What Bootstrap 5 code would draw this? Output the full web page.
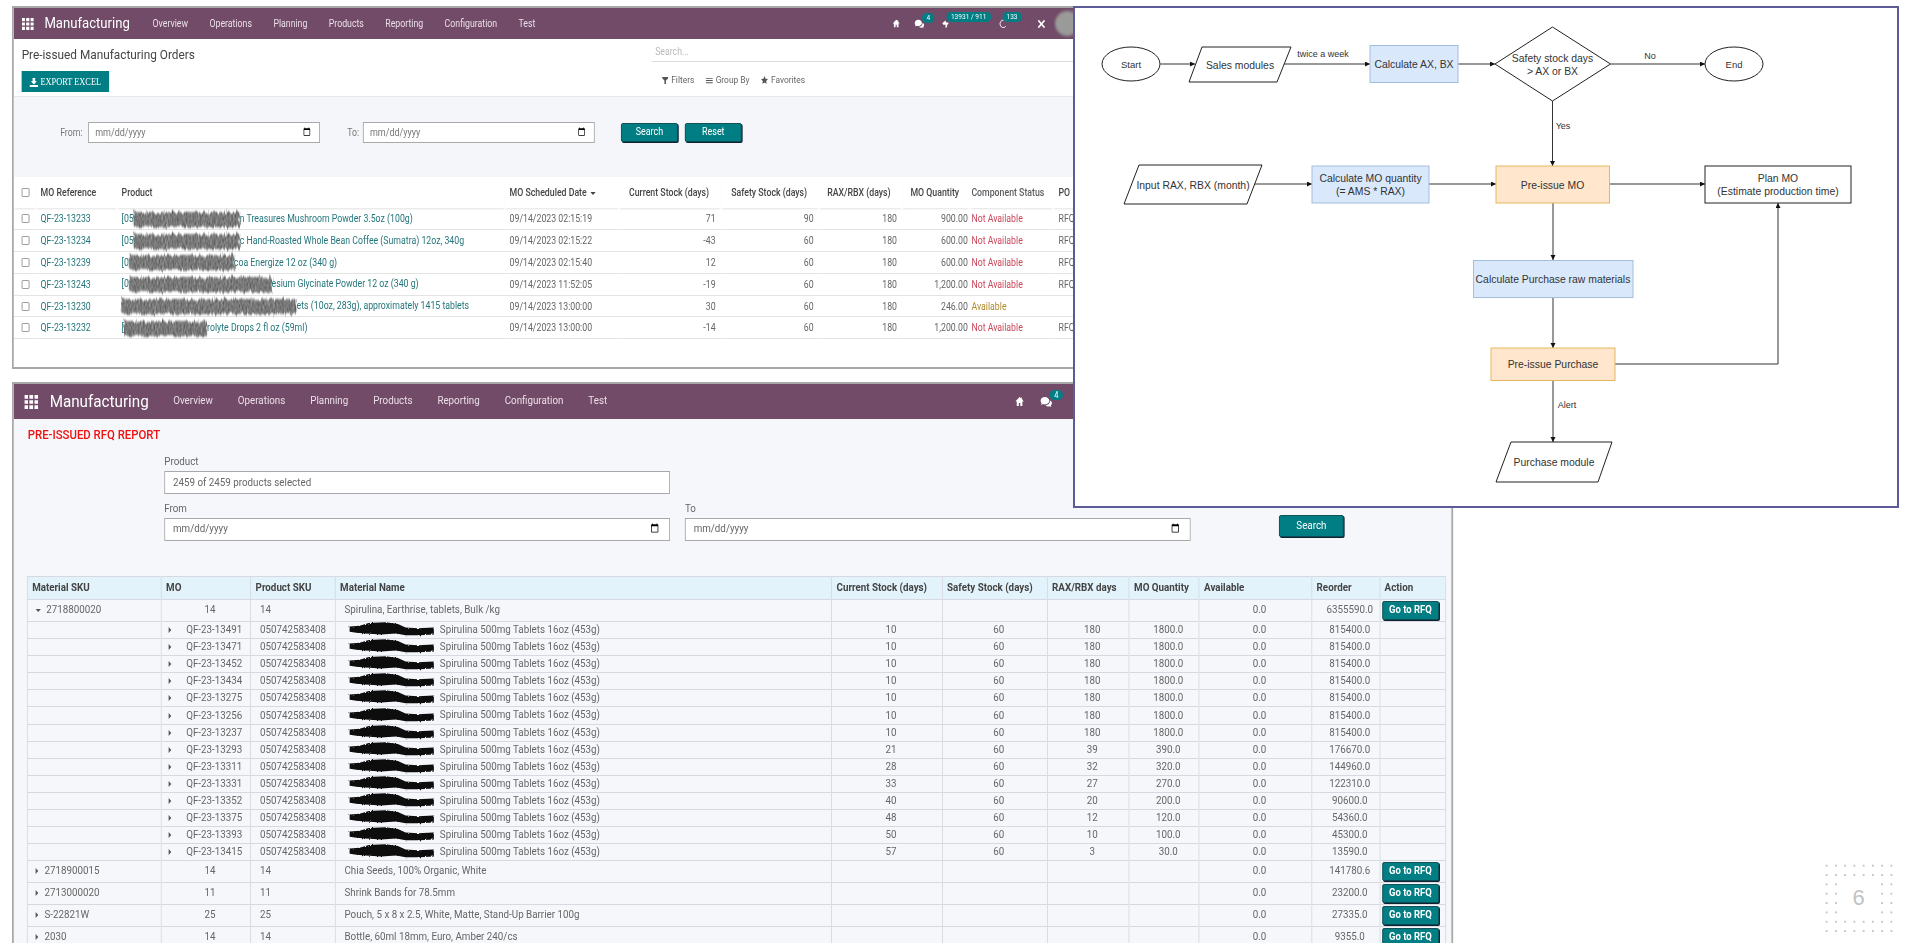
<!DOCTYPE html>
<html lang="en">
<head>
<meta charset="UTF-8">
<title>Pre-issued MO and RFQ</title>
<link rel="stylesheet" href="https://cdn.jsdelivr.net/npm/bootstrap@5.3.0/dist/css/bootstrap.min.css">
<style>
    body { margin: 0; background: #fff; font-family: Roboto, "Liberation Sans", sans-serif; }
    .slide { position: relative; width: 1905px; height: 943px; overflow: hidden; background: #fff; }

    /* the two screenshots are pasted squeezed on the slide */
    .shot { position: absolute; border: 2px solid #a8a8a8; transform: scaleX(.875); transform-origin: 0 0; filter: blur(.3px); overflow: hidden; }
    .shot-mo { left: 12px; top: 6px; width: 1244px; height: 363px; background: #fff; }
    .shot-rfq { left: 12px; top: 382px; width: 1647px; height: 600px; background: #f5f7fb; border-bottom: 0; }

    .topbar { background: #714b67; color: #fff; padding: 0; flex-wrap: nowrap; justify-content: flex-start; }
    .topbar .nav-link { color: #ecdfe9; padding: 0; }
    .shot-mo .topbar { height: 31px; }
    .shot-rfq .topbar { height: 35px; }
    .apps-ico { display: block; fill: #fff; }
    .shot-mo .apps-ico { margin: 0 12px 0 9px; width: 14px; height: 12px; }
    .shot-rfq .apps-ico { margin: 0 13px 0 12px; width: 16px; height: 14px; }
    .brand-name { font-weight: 400; color: #fff; }
    .shot-mo .brand-name { font-size: 15px; margin-right: 26px; }
    .shot-rfq .brand-name { font-size: 17.4px; margin-right: 28px; }
    .shot-mo .menu-list { gap: 24.5px; font-size: 10px; }
    .shot-rfq .menu-list { gap: 28.5px; font-size: 11.2px; }

    .sys-tray { position: relative; margin-left: auto; display: flex; align-items: center; height: 100%; }
    .shot-mo .sys-tray { width: 236px; }
    .shot-rfq .sys-tray { width: 499px; }
    .tray-item { position: relative; display: block; fill: #fff; flex: none; }
    .pill { position: absolute; top: -6px; background: #017e84; color: #fff; border-radius: 6px; font-size: 7.5px; line-height: 10px; height: 10px; padding: 0 5px; font-weight: 400; white-space: nowrap; }
    .face { width: 28px; height: 25px; border-radius: 50%; background: #9a9a98; filter: blur(1.5px); margin-left: 10px; flex: none; }

    /* MO list control panel */
    .ctl-panel { height: 58px; display: flex; border-bottom: 1px solid #e8e8ea; }
    .ctl-left { width: 729px; padding: 5px 0 0 9px; }
    .page-title { font-size: 13.5px; line-height: 20px; font-weight: 400; color: #444; margin: 0 0 5px; }
    .btn-export { background: #017e84; color: #fff; border: 0; border-radius: 0; width: 100px; height: 21px; padding: 0; font: 9.5px "Liberation Serif", serif; }
    .ctl-right { flex: 1; padding-top: 5px; }
    .search-line { height: 18px; border-bottom: 1px solid #dcdcdc; color: #bbb; font-size: 10px; line-height: 16px; padding-left: 4px; }
    .filter-row { display: flex; gap: 13px; margin: 10px 0 0 12px; font-size: 9.6px; line-height: 16px; color: #666; }
    .filter-row svg { fill: #555; margin-right: 1px; vertical-align: -1px; }

    .date-band { height: 80px; background: #f4f6fa; display: flex; align-items: flex-start; padding: 25px 0 0 53px; font-size: 10px; color: #777; }
    .date-band label { width: 32px; line-height: 21px; }
    .date-band .form-control { width: 265px; height: 21px; min-height: 0; border-radius: 0; border-color: #a9a9a9; font-size: 10.3px; padding: 0 7px; color: #777; }
    .date-band .to-lbl { width: 18px; margin-left: 31px; }
    .btn-teal { background: #017e84; color: #fff; border: 1px solid #0d4b50; border-radius: 2px; box-shadow: 1px 1px 0 #123; padding: 0; line-height: 1; }
    .btn-teal:hover { background: #017e84; color: #fff; }
    .date-band .btn-teal { width: 65px; height: 19px; font-size: 10.2px; margin-top: 1px; }

    .mo-table { table-layout: fixed; width: 1240px; margin: 0; font-size: 10px; color: #666; --bs-table-bg: transparent; }
    .mo-table > * > tr > * { padding: 0 5.7px; vertical-align: middle; border-bottom: 1px solid #e3e3e3; overflow: visible; white-space: nowrap; }
    .mo-table thead tr { height: 31px; }
    .mo-table thead th { font-weight: 500; color: #444; border-bottom: 0; box-shadow: 0 2px 2px -1px #e2e2e2; }
    .mo-table thead th.text-end { padding-right: 13px; }
    .mo-table tbody tr { height: 21.8px; }
    .mo-table .form-check-input { width: 9px; height: 9px; margin: 0 0 0 1px; border-radius: 1px; border-color: #999; display: block; }
    .mo-link { color: #23757a; }
    .qty-cell { padding-right: 3px !important; }
    .st-no { color: #c9485b; padding-left: 1px !important; }
    .st-yes { color: #b08a2e; padding-left: 1px !important; }
    .smear { display: inline-block; height: 15px; background: #777; vertical-align: middle; filter: url(#mottle); }
    .sort-tri { display: inline-block; border: 3px solid transparent; border-top-color: #444; border-bottom: 0; margin-left: 4px; vertical-align: 1px; }

    /* RFQ report */
    .rfq-title { color: #f01010; font-size: 13px; font-weight: 500; line-height: 18px; margin: 7px 0 0 16px; }
    .rfq-form { padding: 11px 0 0 172px; font-size: 11.2px; color: #666; }
    .rfq-form label { display: block; line-height: 14px; margin-bottom: 1.5px; }
    .rfq-form .form-control { width: 578px; height: 23px; min-height: 0; border-radius: 0; border-color: #a9a9a9; font-size: 11.2px; color: #666; padding: 0 9px; background: #fff; }
    .rfq-form .form-control::placeholder { color: #666; opacity: 1; }
    .rfq-form .date-line { margin-top: 8.5px; }
    .go-btn { width: 74px; height: 22px; font-size: 11.2px; margin: 0 0 3.5px 0; }
    .rfq-table { table-layout: fixed; width: 1620.6px; margin: 35.5px 0 0 15px; font-size: 11.2px; color: #666; --bs-table-bg: transparent; --bs-table-border-color: #d6d9df; border-color: #d6d9df; }
    .rfq-table > * > tr > * { padding: 0 0 0 5px; vertical-align: middle; white-space: nowrap; overflow: visible; }
    .rfq-table thead tr { height: 23px; }
    .rfq-table thead th { background: #e3f3fc; color: #444; font-weight: 700; }
    .rfq-table tr.grp-row { height: 22px; }
    .rfq-table tr.sub-row { height: 17.1px; line-height: 14px; }
    .rfq-table .ctr { text-align: center; padding-left: 9px; }
    .rfq-table .pad-name { padding-left: 10px; }
    .tri-d, .tri-r { display: inline-block; border: 3px solid transparent; }
    .tri-d { border-top-color: #555; border-bottom: 0; margin: 0 6px 1px 4px; }
    .tri-r { border-left-color: #555; border-right: 0; margin: 0 7px 0 4px; }
    .sub-tri { margin: 0 17px 0 3px; }
    .black-out { width: 108px; height: 14px; vertical-align: middle; overflow: visible; margin-right: 1px; }
    #blot { overflow: visible; }
    .rfq-btn { width: 65px; height: 19px; font-size: 10.8px; font-weight: 700; margin-left: -3px; display: block; }

    /* flow chart pasted over the screenshots */
    .chart-frame { position: absolute; left: 1073px; top: 6px; width: 826px; height: 502px; border: 2px solid #5d5a98; background: #fff; }
    .chart-frame svg { display: block; font-family: "Liberation Sans", Arial, sans-serif; font-size: 10.4px; fill: #333; }
    .chart-frame text { text-anchor: middle; dominant-baseline: central; }
    .chart-frame .lbl { font-size: 9px; }
    .ln { stroke: #333; stroke-width: 1; fill: none; marker-end: url(#tip); }
    .bx-w { fill: #fff; stroke: #222; stroke-width: 1; }
    .bx-b { fill: #dae8fc; stroke: #a5bddc; stroke-width: 1; }
    .bx-o { fill: #ffe6cc; stroke: #e5b75c; stroke-width: 1; }

    .page-no { position: absolute; left: 1821.5px; top: 860.5px; width: 74px; height: 74.8px; background-image: radial-gradient(circle, #c4c4c4 1.1px, transparent 1.4px); background-size: 9.25px 9.35px; }
    .page-no span { position: absolute; left: 18.5px; top: 18.7px; width: 37px; height: 37.4px; background: #fff; color: #c2c2c2; font: 22px/37px "Liberation Sans", sans-serif; text-align: center; }
</style>
</head>
<body>
<svg width="0" height="0" class="position-absolute">
    <defs>
        <filter id="rough" x="-10%" y="-40%" width="120%" height="180%">
            <feTurbulence type="fractalNoise" baseFrequency="0.35" numOctaves="2" seed="4" result="n"/>
            <feDisplacementMap in="SourceGraphic" in2="n" scale="3"/>
            <feGaussianBlur stdDeviation="0.4"/>
        </filter>
        <filter id="mottle" x="-10%" y="-30%" width="120%" height="160%" color-interpolation-filters="sRGB">
            <feTurbulence type="fractalNoise" baseFrequency="0.3" numOctaves="2" seed="7" result="n"/>
            <feDisplacementMap in="SourceGraphic" in2="n" scale="7" result="shape"/>
            <feTurbulence type="fractalNoise" baseFrequency="0.5" numOctaves="2" seed="2"/>
            <feColorMatrix values=".6 0 0 0 .17  .6 0 0 0 .17  .6 0 0 0 .17  0 0 0 0 1"/>
            <feComposite operator="in" in2="shape"/>
            <feGaussianBlur stdDeviation="0.8"/>
        </filter>
        <symbol id="blot" viewBox="0 0 108 16">
            <path d="M-1 4 L12 3 L24 0 L46 -1 L62 1 L72 5 L88 6 L109 5 L109 13 L90 14 L72 14 L60 12 L40 13 L20 12 L8 11 L-1 10Z" fill="#0b0b0b" filter="url(#rough)"/>
        </symbol>
        <symbol id="ico-home" viewBox="0 0 12 12"><path d="M6 1 1 5.600l.7.8.8-.7V11h2.600V7.600h1.800V11h2.600V5.700l.8.7.7-.8L9 3.300V1.500H8v.9Z"/></symbol>
        <symbol id="ico-chat" viewBox="0 0 14 12"><path d="M5.500 1C2.700 1 .5 2.700 .5 4.800c0 1 .5 1.800 1.200 2.500L1 9l2.200-.9c.7.2 1.500.3 2.300.3 2.800 0 5-1.600 5-3.600S8.300 1 5.500 1Z"/><path d="M11.300 4.400c.1.200.1.500.1.700 0 2.300-2.300 4.100-5.100 4.200.8.800 2 1.200 3.300 1.200.5 0 1-.1 1.500-.2l1.700.7-.5-1.500c.8-.7 1.200-1.500 1.200-2.400 0-1.100-.8-2-2.200-2.700Z"/></symbol>
        <symbol id="ico-bug" viewBox="0 0 12 12"><path d="M1 5.500 5.500 2 7 4.500 11 5 8.500 8 7.500 11.500 5.500 11 6 7.500 2.500 7.500Z"/></symbol>
        <symbol id="ico-moon" viewBox="0 0 12 12"><path d="M8 1.500a5 5 0 1 0 3 8.200" fill="none" stroke="#fff" stroke-width="1.300"/></symbol>
        <symbol id="ico-tools" viewBox="0 0 12 12"><path d="M1 2.500 2.500 1l8.500 8.500L9.500 11Z"/><path d="M11 2.500 9.500 1 1 9.500 2.500 11Z"/></symbol>
        <symbol id="ico-grid" viewBox="0 0 15 13"><path d="M0 0h4v3.500H0zM5.500 0h4v3.500h-4zM11 0h4v3.500h-4zM0 4.750h4v3.500H0zM5.500 4.750h4v3.500h-4zM11 4.750h4v3.500h-4zM0 9.500h4V13H0zM5.500 9.500h4V13h-4zM11 9.500h4V13h-4z"/></symbol>
    </defs>
</svg>

<div class="slide">

    <!-- manufacturing orders list -->
    <div class="shot shot-mo">
        <nav class="navbar topbar">
            <svg class="apps-ico"><use href="#ico-grid"/></svg>
            <span class="brand-name">Manufacturing</span>
            <ul class="nav menu-list">
                <li><a class="nav-link" href="#">Overview</a></li>
                <li><a class="nav-link" href="#">Operations</a></li>
                <li><a class="nav-link" href="#">Planning</a></li>
                <li><a class="nav-link" href="#">Products</a></li>
                <li><a class="nav-link" href="#">Reporting</a></li>
                <li><a class="nav-link" href="#">Configuration</a></li>
                <li><a class="nav-link" href="#">Test</a></li>
            </ul>
            <div class="sys-tray">
                <svg class="tray-item" width="9" height="9"><use href="#ico-home"/></svg>
                <div class="tray-item ms-3" style="width:12px;height:10px"><svg class="d-block" width="12" height="10"><use href="#ico-chat"/></svg><span class="pill" style="left:9px">4</span></div>
                <div class="tray-item" style="width:10px;height:9px;margin-left:19px"><svg class="d-block" width="10" height="9"><use href="#ico-bug"/></svg><span class="pill" style="left:6px;top:-7px">13931 / 911</span></div>
                <div class="tray-item" style="width:10px;height:9px;margin-left:54.5px"><svg class="d-block" width="10" height="9"><use href="#ico-moon"/></svg><span class="pill" style="left:5px;top:-7px">133</span></div>
                <svg class="tray-item" width="11" height="10" style="margin-left:34px"><use href="#ico-tools"/></svg>
                <div class="face"></div>
            </div>
        </nav>
        <div class="ctl-panel">
            <div class="ctl-left">
                <h1 class="page-title">Pre-issued Manufacturing Orders</h1>
                <button class="btn btn-export" type="button"><svg width="10" height="9" viewBox="0 0 10 9" fill="#fff"><path d="M3.500 0h3v3.200h2L5 6.500 1.500 3.200h2ZM0 7h10v2H0Z"/></svg> EXPORT EXCEL</button>
            </div>
            <div class="ctl-right">
                <div class="search-line">Search...</div>
                <div class="filter-row">
                    <span><svg width="7" height="7" viewBox="0 0 8 8"><path d="M0 0h8v1.500L5 4v4H3V4L0 1.500Z"/></svg> Filters</span>
                    <span><svg width="8" height="7" viewBox="0 0 9 8"><path d="M0 1h9v1H0zM0 3.500h9v1H0zM0 6h9v1H0z"/></svg> Group By</span>
                    <span><svg width="8" height="8" viewBox="0 0 10 10"><path d="m5 0 1.500 3.300 3.500.4-2.600 2.400.7 3.600L5 8 1.900 9.700l.7-3.600L0 3.700l3.500-.4Z"/></svg> Favorites</span>
                </div>
            </div>
        </div>
        <div class="date-band">
            <label>From:</label>
            <input type="date" class="form-control">
            <label class="to-lbl">To:</label>
            <input type="date" class="form-control">
            <button class="btn btn-teal" style="margin-left:30px" type="button">Search</button>
            <button class="btn btn-teal ms-2" type="button">Reset</button>
        </div>
        <table class="table mo-table">
            <colgroup>
                <col style="width:25px"><col style="width:92.6px"><col style="width:443.4px"><col style="width:131.4px"><col style="width:115.4px"><col style="width:112px"><col style="width:95.4px"><col style="width:78.3px"><col style="width:94.9px"><col style="width:52px">
            </colgroup>
            <thead>
                <tr>
                    <th class="ps-2"><input class="form-check-input" type="checkbox"></th>
                    <th>MO Reference</th><th>Product</th>
                    <th>MO Scheduled Date<span class="sort-tri"></span></th>
                    <th class="text-end">Current Stock (days)</th><th class="text-end">Safety Stock (days)</th><th class="text-end">RAX/RBX (days)</th><th class="text-end">MO Quantity</th>
                    <th class="st-no text-body-secondary">Component Status</th><th>PO</th>
                </tr>
            </thead>
            <tbody id="moRows"></tbody>
        </table>
    </div>

    <!-- pre-issued RFQ report -->
    <div class="shot shot-rfq">
        <nav class="navbar topbar">
            <svg class="apps-ico"><use href="#ico-grid"/></svg>
            <span class="brand-name">Manufacturing</span>
            <ul class="nav menu-list">
                <li><a class="nav-link" href="#">Overview</a></li>
                <li><a class="nav-link" href="#">Operations</a></li>
                <li><a class="nav-link" href="#">Planning</a></li>
                <li><a class="nav-link" href="#">Products</a></li>
                <li><a class="nav-link" href="#">Reporting</a></li>
                <li><a class="nav-link" href="#">Configuration</a></li>
                <li><a class="nav-link" href="#">Test</a></li>
            </ul>
            <div class="sys-tray">
                <svg class="tray-item" width="11" height="11"><use href="#ico-home"/></svg>
                <div class="tray-item" style="width:14px;height:12px;margin-left:18px"><svg class="d-block" width="14" height="12"><use href="#ico-chat"/></svg><span class="pill" style="left:11px;font-size:8.500px">4</span></div>
            </div>
        </nav>
        <h2 class="rfq-title">PRE-ISSUED RFQ REPORT</h2>
        <form class="rfq-form">
            <label>Product</label>
            <input type="text" class="form-control" placeholder="2459 of 2459 products selected">
            <div class="d-flex align-items-end date-line">
                <div>
                    <label>From</label>
                    <input type="date" class="form-control">
                </div>
                <div style="margin-left:17px">
                    <label>To</label>
                    <input type="date" class="form-control">
                </div>
                <button class="btn btn-teal go-btn" style="margin-left:101px" type="button">Search</button>
            </div>
        </form>
        <table class="table table-bordered rfq-table">
            <colgroup>
                <col style="width:153.1px"><col style="width:102.3px"><col style="width:96.6px"><col style="width:567.4px"><col style="width:126.3px"><col style="width:120px"><col style="width:93.7px"><col style="width:80px"><col style="width:128.6px"><col style="width:77.7px"><col style="width:74.9px">
            </colgroup>
            <thead>
                <tr>
                    <th>Material SKU</th><th>MO</th><th>Product SKU</th><th>Material Name</th><th>Current Stock (days)</th><th>Safety Stock (days)</th><th>RAX/RBX days</th><th>MO Quantity</th><th>Available</th><th>Reorder</th><th>Action</th>
                </tr>
            </thead>
            <tbody id="rfqRows"></tbody>
        </table>
    </div>

    <!-- flow chart, uses slide coordinates through the viewBox -->
    <div class="chart-frame">
        <svg width="822" height="498" viewBox="1075 8 822 498">
            <defs>
                <marker id="tip" markerWidth="6" markerHeight="6" refX="5" refY="2.500" orient="auto" markerUnits="userSpaceOnUse"><path d="M0 0 5 2.500 0 5Z" fill="#111"/></marker>
            </defs>
            <path class="ln" d="M1160.500 64H1195"/>
            <path class="ln" d="M1283 64H1370"/>
            <path class="ln" d="M1458 64H1495"/>
            <path class="ln" d="M1610.500 64H1705"/>
            <path class="ln" d="M1552.500 101V166"/>
            <path class="ln" d="M1254 184H1312"/>
            <path class="ln" d="M1429 184H1496"/>
            <path class="ln" d="M1609.500 184H1705"/>
            <path class="ln" d="M1553 203V260"/>
            <path class="ln" d="M1553 298V348"/>
            <path class="ln" d="M1615 364H1778V203"/>
            <path class="ln" d="M1553 380.500V442"/>

            <ellipse class="bx-w" cx="1131" cy="64" rx="29" ry="17"/>
            <text x="1131" y="64" class="lbl" style="font-size:9.500px">Start</text>
            <path class="bx-w" d="M1202 47H1291L1277 82H1189Z"/>
            <text x="1240" y="65">Sales modules</text>
            <text x="1323" y="54" class="lbl">twice a week</text>
            <rect class="bx-b" x="1370" y="45.500" width="88" height="37"/>
            <text x="1414" y="64">Calculate AX, BX</text>
            <path class="bx-w" d="M1552.500 27 1610.500 64 1552.500 101 1495 64Z"/>
            <text x="1552.500" y="58">Safety stock days</text>
            <text x="1552.500" y="71">&gt; AX or BX</text>
            <text x="1650" y="56" class="lbl">No</text>
            <ellipse class="bx-w" cx="1734" cy="64" rx="29" ry="17"/>
            <text x="1734" y="64" class="lbl" style="font-size:9.500px">End</text>
            <text x="1563" y="126" class="lbl">Yes</text>

            <path class="bx-w" d="M1139 165H1262L1247 204H1124Z"/>
            <text x="1193" y="185">Input RAX, RBX (month)</text>
            <rect class="bx-b" x="1312" y="166" width="117" height="37"/>
            <text x="1370.500" y="178">Calculate MO quantity</text>
            <text x="1370.500" y="191">(= AMS * RAX)</text>
            <rect class="bx-o" x="1496" y="166" width="113.500" height="37"/>
            <text x="1552.500" y="185">Pre-issue MO</text>
            <rect class="bx-w" x="1705" y="166" width="146" height="37"/>
            <text x="1778" y="178">Plan MO</text>
            <text x="1778" y="191">(Estimate production time)</text>

            <rect class="bx-b" x="1473.500" y="260.500" width="159.500" height="37"/>
            <text x="1553" y="279">Calculate Purchase raw materials</text>
            <rect class="bx-o" x="1491" y="348" width="124" height="32.500"/>
            <text x="1553" y="364.500">Pre-issue Purchase</text>
            <text x="1567" y="405" class="lbl">Alert</text>
            <path class="bx-w" d="M1511 442H1612L1598 482H1496Z"/>
            <text x="1554" y="462.500">Purchase module</text>
        </svg>
    </div>

    <div class="page-no"><span>6</span></div>
</div>

<script src="https://cdn.jsdelivr.net/npm/bootstrap@5.3.0/dist/js/bootstrap.bundle.min.js"></script>
<script>
    const moData = [
        ["QF-23-13233", "[05", 121, "n Treasures Mushroom Powder 3.5oz (100g)", "09/14/2023 02:15:19", 71, 90, "900.00", false],
        ["QF-23-13234", "[05", 121, "c Hand-Roasted Whole Bean Coffee (Sumatra) 12oz, 340g", "09/14/2023 02:15:22", -43, 60, "600.00", false],
        ["QF-23-13239", "[0", 120, "coa Energize 12 oz (340 g)", "09/14/2023 02:15:40", 12, 60, "600.00", false],
        ["QF-23-13243", "[0", 163, "esium Glycinate Powder 12 oz (340 g)", "09/14/2023 11:52:05", -19, 60, "1,200.00", false],
        ["QF-23-13230", "", 200, "ets (10oz, 283g), approximately 1415 tablets", "09/14/2023 13:00:00", 30, 60, "246.00", true],
        ["QF-23-13232", "[", 95, "rolyte Drops 2 fl oz (59ml)", "09/14/2023 13:00:00", -14, 60, "1,200.00", false]
    ];

    document.getElementById("moRows").innerHTML = moData.map(m => `
        <tr>
            <td class="ps-2"><input class="form-check-input" type="checkbox"></td>
            <td class="mo-link">${m[0]}</td>
            <td class="mo-link">${m[1]}<span class="smear" style="width:${m[2]}px"></span>${m[3]}</td>
            <td>${m[4]}</td>
            <td class="text-end">${m[5]}</td>
            <td class="text-end">${m[6]}</td>
            <td class="text-end">180</td>
            <td class="text-end qty-cell">${m[7]}</td>
            <td class="${m[8] ? "st-yes" : "st-no"}">${m[8] ? "Available" : "Not Available"}</td>
            <td>${m[8] ? "" : "RFQ-2309"}</td>
        </tr>`).join("");

    const subRows = [
        [13491, 10, 180, "1800.0", "815400.0"], [13471, 10, 180, "1800.0", "815400.0"],
        [13452, 10, 180, "1800.0", "815400.0"], [13434, 10, 180, "1800.0", "815400.0"],
        [13275, 10, 180, "1800.0", "815400.0"], [13256, 10, 180, "1800.0", "815400.0"],
        [13237, 10, 180, "1800.0", "815400.0"], [13293, 21, 39, "390.0", "176670.0"],
        [13311, 28, 32, "320.0", "144960.0"], [13331, 33, 27, "270.0", "122310.0"],
        [13352, 40, 20, "200.0", "90600.0"], [13375, 48, 12, "120.0", "54360.0"],
        [13393, 50, 10, "100.0", "45300.0"], [13415, 57, 3, "30.0", "13590.0"]
    ];

    function groupRow(sku, mo, name, reorder, open) {
        return `<tr class="grp-row">
            <td><span class="${open ? "tri-d" : "tri-r"}"></span>${sku}</td>
            <td class="ctr">${mo}</td><td class="pad-name">${mo}</td><td class="pad-name">${name}</td>
            <td></td><td></td><td></td><td></td>
            <td class="ctr">0.0</td><td class="ctr">${reorder}</td>
            <td><button class="btn btn-teal rfq-btn" type="button">Go to RFQ</button></td>
        </tr>`;
    }

    let rfqHtml = groupRow("2718800020", 14, "Spirulina, Earthrise, tablets, Bulk /kg", "6355590.0", true);
    subRows.forEach(r => {
        rfqHtml += `<tr class="sub-row">
            <td></td>
            <td><span class="tri-r sub-tri"></span>QF-23-${r[0]}</td>
            <td class="pad-name">050742583408</td>
            <td class="pad-name"><svg class="black-out"><use href="#blot"/></svg>Spirulina 500mg Tablets 16oz (453g)</td>
            <td class="ctr">${r[1]}</td><td class="ctr">60</td><td class="ctr">${r[2]}</td><td class="ctr">${r[3]}</td>
            <td class="ctr">0.0</td><td class="ctr">${r[4]}</td><td></td>
        </tr>`;
    });
    rfqHtml += groupRow("2718900015", 14, "Chia Seeds, 100% Organic, White", "141780.6");
    rfqHtml += groupRow("2713000020", 11, "Shrink Bands for 78.5mm", "23200.0");
    rfqHtml += groupRow("S-22821W", 25, "Pouch, 5 x 8 x 2.5, White, Matte, Stand-Up Barrier 100g", "27335.0");
    rfqHtml += groupRow("2030", 14, "Bottle, 60ml 18mm, Euro, Amber 240/cs", "9355.0");
    document.getElementById("rfqRows").innerHTML = rfqHtml;
</script>
</body>
</html>
